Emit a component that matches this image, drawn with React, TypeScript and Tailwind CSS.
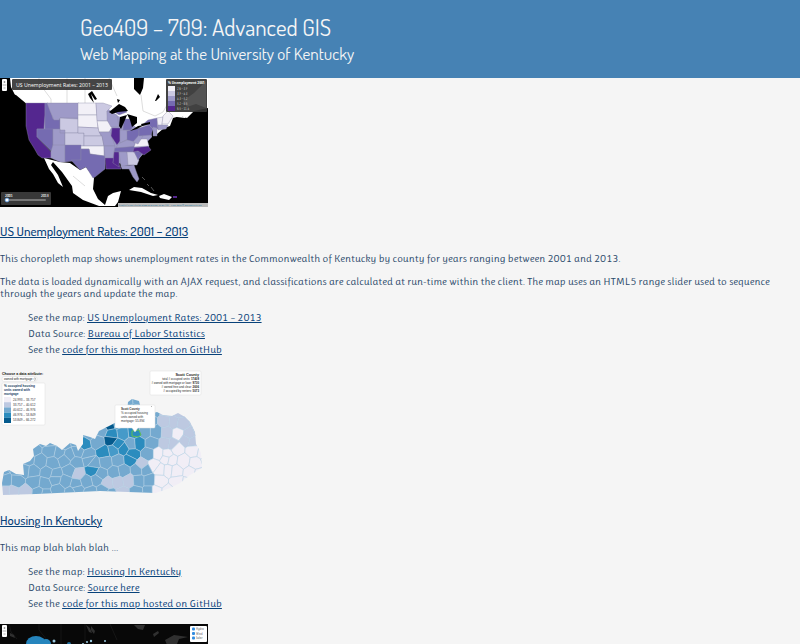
import type { ReactNode } from "react";

type Shape = [string, string];

const states: Shape[] = [
  ["26,25 45,25 45,37 44,49 44,51 37,51 37,59 51,74 51,80 42,80 38,77 34,70 29,62 26,48 26,36", "#54278f"],
  ["45,25 48,25 51,34 53,41 60,41 60,52 45,52", "#756bb1"],
  ["47,25 79,25 79,40 60,40 59,42 54,42 50,33", "#9e9ac8"],
  ["60,40 78,41 78,55 65,55 65,52 60,52", "#cbc9e2"],
  ["37,51 53,51 53,70 51,73 37,59", "#756bb1"],
  ["53,51 60,51 60,55 65,55 65,68 53,68", "#9e9ac8"],
  ["65,55 84,55 84,68 65,68", "#cbc9e2"],
  ["53,67 65,67 65,84 60,84 51,80 51,73", "#9e9ac8"],
  ["65,67 81,67 81,82 65,84", "#756bb1"],
  ["78,25 96,25 97,37 78,37", "#f2f0f7"],
  ["78,37 97,37 98,50 78,49", "#f2f0f7"],
  ["78,49 98,50 101,58 84,58 84,55 78,55", "#cbc9e2"],
  ["84,58 102,58 104,68 84,68", "#cbc9e2"],
  ["81,68 104,68 104,78 90,76 89,71 81,71", "#f2f0f7"],
  ["81,71 89,71 90,76 105,78 105,91 95,99 93,100 86,89 80,92 71,82 81,82", "#756bb1"],
  ["96,25 103,25 112,28 107,33 108,43 97,43", "#cbc9e2"],
  ["97,43 109,43 112,49 109,54 99,54", "#f2f0f7"],
  ["99,54 110,54 115,68 104,68 102,58", "#9e9ac8"],
  ["104,68 115,68 113,80 105,80", "#9e9ac8"],
  ["105,80 114,80 113,85 119,86 121,91 106,91", "#54278f"],
  ["107,33 117,37 119,49 111,49 107,42", "#9e9ac8"],
  ["112,50 120,50 120,63 117,67 111,58", "#54278f"],
  ["120,52 127,52 128,61 120,65", "#9e9ac8"],
  ["113,33 122,29 127,34 119,37", "#756bb1"],
  ["124,41 131,41 133,48 131,52 123,52", "#756bb1"],
  ["127,53 139,50 139,59 133,64 127,62", "#756bb1"],
  ["118,66 127,62 136,64 133,69 116,70", "#9e9ac8"],
  ["115,70 139,68 134,74 114,74", "#756bb1"],
  ["114,74 119,74 119,89 113,85", "#54278f"],
  ["119,74 127,74 129,87 121,89", "#9e9ac8"],
  ["127,74 134,74 139,82 137,87 128,87", "#cbc9e2"],
  ["134,73 143,74 138,82", "#756bb1"],
  ["134,70 148,68 151,72 144,77 138,73 133,74", "#54278f"],
  ["136,63 140,61 147,61 149,68 134,69", "#f2f0f7"],
  ["133,64 139,57 143,58 138,66", "#9e9ac8"],
  ["139,50 149,47 153,51 151,57 139,58", "#756bb1"],
  ["141,48 148,42 157,40 158,51 152,50 149,47", "#756bb1"],
  ["153,49 157,50 157,58 153,58", "#9e9ac8"],
  ["157,40 163,39 162,47 158,48", "#f2f0f7"],
  ["158,47 168,47 166,51 158,52", "#9e9ac8"],
  ["163,38 168,33 173,38 168,46 162,46", "#f2f0f7"],
  ["121,88 134,87 136,93 139,101 137,104 133,99 129,91 122,91", "#9e9ac8"],
];

const lakes = [
  "109,34 114,30 119,26 125,29 128,33 118,34 112,36",
  "120,39 127,37 125,42 121,51 119,48",
  "127,36 137,39 137,45 132,49 130,42",
  "130,53 138,48 144,47 137,51",
  "141,46 150,44 150,46 142,48",
];

function ZoomControl() {
  return (
    <g>
      <rect x="2" y="1" width="5" height="12" rx="1" fill="#fff" />
      <path d="M2.5 7h4M3.5 4h2M4.5 3v2M3.5 10h2" stroke="#777" strokeWidth=".6" />
    </g>
  );
}

function UnemploymentMap() {
  const classes: Shape[] = [
    ["#f2f0f7", "2.6 – 3.7"],
    ["#cbc9e2", "3.7 – 4.3"],
    ["#9e9ac8", "4.3 – 5.2"],
    ["#756bb1", "5.2 – 6.5"],
    ["#54278f", "6.5 – 11.4"],
  ];
  return (
    <svg viewBox="0 0 208 129" className="block w-52" role="img" aria-label="Map of US unemployment rates">
      <rect width="208" height="129" fill="#000" />
      <path d="M10 0H208V30L194 33 187 40 180 38 173 40 170 48 164 50 157 56 153 52 139 56 128 62 118 58 108 52 26 27 16 19 11 9Z" fill="#fff" />
      <path d="M44 80L60 84 70 85 80 92 86 89 94 100 93 111 98 121 105 127 108 118 113 115 121 113 118 124 115 128H99L83 122 73 115 72 108 62 94 53 84 51 87 58 97 63 109 58 105 53 96 49 91Z" fill="#fff" />
      <path d="M134 0H144L143 10 140 17 134 11ZM155 23l3-7 2 3-4 4ZM88 16l4-3 5 8-2 1-4-6 3 9-4-5ZM117 21l3 1-2 3ZM12 16l4 1 12 10-2 1-10-8Z" fill="#000" />
      <path d="M39 0V5L51 21V25M67 0V25M85 0V25M109 0L117 18M141 17L143 33 155 38 163 34 167 27M73 98L85 108" fill="none" stroke="#bbb" strokeWidth=".5" />
      <path d="M45 27H103L118 38 128 42 139 52 150 49 152 59 147 64 149 69 138 82 128 87 112 84 90 76 55 72 40 55Z" fill="#9e9ac8" />
      <g stroke="#8c89a6" strokeWidth=".4">
        {states.map(([points, fill]) => (
          <polygon key={points} points={points} fill={fill} />
        ))}
      </g>
      {lakes.map((points) => (
        <polygon key={points} points={points} fill="#000" />
      ))}
      <path d="M129 112l5-3 8 1 9 5 7 2-5 1-12-4ZM159 118l5-2 8 3-3 3-9-2Z" fill="#fff" />
      <path d="M142 99l3 3M147 106l2 2M151 109l3 4" stroke="#777" strokeWidth=".7" />
      <path d="M173 119h4" stroke="#54278f" strokeWidth="2" />
      <path d="M175 39l4-4 4 4 5-3-3 4-8-1Z" fill="#fff" />
      <ZoomControl />
      <rect x="12" y="1" width="100" height="11" rx="1" fill="#292929" fillOpacity=".87" />
      <text x="16" y="8.5" fill="#fff" fontSize="5.2" className="font-['Open_Sans']">US Unemployment Rates: 2001 – 2013</text>
      <rect x="166" y="1" width="41" height="33" rx="1" fill="#333" fillOpacity=".93" />
      <path d="M183 23l11-8 12-12v27l-10-4-9 3Z" fill="#666" fillOpacity=".5" />
      <text x="168" y="6" fill="#fff" fontSize="3.2" fontWeight="700" className="font-['Open_Sans']">% Unemployment 2001</text>
      {classes.map(([fill, label], i) => (
        <g key={label}>
          <rect x="168" y={8 + i * 5} width="7" height="5" fill={fill} />
          <text x="177" y={12 + i * 5} fill="#ddd" fontSize="3">{label}</text>
        </g>
      ))}
      <rect x="1" y="114" width="50" height="13" rx="1" fill="#383838" />
      <text x="5" y="119" fill="#fff" fontSize="3.5" fontWeight="700">2001</text>
      <text x="41" y="119" fill="#fff" fontSize="3.5" fontWeight="700">2013</text>
      <rect x="5" y="121" width="41" height="2" rx="1" fill="#777" />
      <circle cx="7" cy="122" r="2" fill="#fff" stroke="#3d8bdf" strokeWidth=".7" />
      <rect x="118" y="125" width="90" height="4" fill="#bbb" />
      <text x="119" y="127.8" fill="#0878a8" fontSize="2.6">Leaflet | Map tiles by Stamen Design, CC BY 3.0 — Map data © OpenStreetMap</text>
    </svg>
  );
}

const kentucky =
  "M3 125L2 113 4 102 9 100 16 104 24 105 23 94 30 91 34 86 33 79 40 74 46 76 50 73 57 76 62 80 70 73 76 75 78 81 83 74 83 65 90 67 95 69 99 61 107 57 115 53 119 44 127 42 128 32 132 29 139 31 142 43 150 44 157 42 163 45 172 46 178 43 185 47 190 52 195 62 196 74 201 83 202 98 190 105 180 113 170 118 156 123 100 121 36 124Z";

type Point = [number, number];

const seats: Point[] = [];
for (let row = 0; row < 10; row++) {
  for (let col = 0; col < 20; col++) {
    const jx = ((col * 37 + row * 23 + col * row * 5) % 13) - 6;
    const jy = ((col * 19 + row * 41 + col * col * 7) % 13) - 6;
    seats.push([col * 11 + (row % 2) * 5 + jx * 0.55 - 2, row * 10 + 32 + jy * 0.5]);
  }
}

// Cuts the square around one county seat down to the points nearer to it than to any other seat.
function countyShape([sx, sy]: Point): Point[] {
  let cell: Point[] = [[sx - 15, sy - 15], [sx + 15, sy - 15], [sx + 15, sy + 15], [sx - 15, sy + 15]];
  for (const [ox, oy] of seats) {
    const dx = ox - sx;
    const dy = oy - sy;
    if ((dx === 0 && dy === 0) || Math.hypot(dx, dy) > 42) continue;
    const side = ([x, y]: Point) => (x - (sx + ox) / 2) * dx + (y - (sy + oy) / 2) * dy;
    const next: Point[] = [];
    cell.forEach((a, i) => {
      const b = cell[(i + 1) % cell.length];
      const sa = side(a);
      const sb = side(b);
      if (sa <= 0) next.push(a);
      if (sa < 0 !== sb < 0) {
        const t = sa / (sa - sb);
        next.push([a[0] + (b[0] - a[0]) * t, a[1] + (b[1] - a[1]) * t]);
      }
    });
    cell = next;
  }
  return cell;
}

const darkCounties: Point[] = [[73, 78], [88, 72], [103, 76], [88, 101], [112, 67], [125, 73], [108, 83], [121, 79], [136, 68], [137, 84], [134, 35], [114, 74], [126, 85]];
const navyCounties: Point[] = [[115, 70], [111, 56]];
const lilacCounties: Point[] = [[9, 121], [30, 121], [52, 115], [77, 101], [102, 114], [115, 115], [130, 109], [137, 94], [148, 92], [121, 118]];

function countyFill([x, y]: Point) {
  const near = (list: Point[], reach: number) => list.some(([a, b]) => Math.hypot(x - a, y - b) < reach);
  if (near(navyCounties, 5)) return "#045a8d";
  if (near(darkCounties, 6)) return "#2b8cbe";
  if (y > 77 && x > 154) return "#f1eef6";
  if (Math.hypot(x - 180, y - 66) < 6) return "#f1eef6";
  if (near(lilacCounties, 6) || (x > 162 && y < 77)) return "#bdc9e1";
  if (x > 102 && x < 128 && y > 50 && y < 87) return "#469ac9";
  return "#74a9cf";
}

const counties = seats.map((seat) => ({
  points: countyShape(seat).map(([x, y]) => `${x.toFixed(1)},${y.toFixed(1)}`).join(" "),
  fill: countyFill(seat),
}));

function HousingMap() {
  const classes: Shape[] = [
    ["#f1eef6", "24.993 – 33.757"],
    ["#bdc9e1", "33.757 – 40.612"],
    ["#74a9cf", "40.612 – 46.976"],
    ["#2b8cbe", "46.976 – 53.849"],
    ["#045a8d", "53.849 – 66.272"],
  ];
  return (
    <svg viewBox="0 0 208 126" className="block w-52 font-['Liberation_Sans',sans-serif]" role="img" aria-label="Map of housing in Kentucky">
      <defs>
        <clipPath id="kentucky"><path d={kentucky} /></clipPath>
      </defs>
      <g clipPath="url(#kentucky)" stroke="#b4d0e5" strokeWidth=".5">
        {counties.map(({ points, fill }, i) => <polygon key={i} points={points} fill={fill} />)}
      </g>
      <path d="M132 61l7-1 2 5-3 2-6-1Z" fill="#2b8cbe" stroke="#61bd55" strokeWidth="1" />
      <text x="2" y="5" fill="#111" fontSize="3.6" fontWeight="700">Choose a data attribute:</text>
      <rect x="2" y="6.5" width="35" height="5" rx="2" fill="#fff" stroke="#ddd" strokeWidth=".5" />
      <text x="4" y="10" fill="#222" fontSize="3">owned with mortgage</text>
      <path d="M34 8.6l.8-.8.8.8M34 9.5l.8.8.8-.8" fill="none" stroke="#222" strokeWidth=".5" />
      <g stroke="#ddd" strokeWidth=".5" fill="#fff">
        <rect x="2" y="13" width="43" height="42" rx="1" />
        <rect x="150" y="1" width="51" height="24" rx="1" />
        <path d="M116 35h38q1 0 1 1v21q0 1-1 1h-16l-3 4-3-4h-16q-1 0-1-1V36q0-1 1-1Z" />
      </g>
      <g fill="#173e60" fontSize="3.2" fontWeight="700">
        <text x="4" y="17">% occupied housing</text>
        <text x="4" y="21">units owned with</text>
        <text x="4" y="25">mortgage</text>
      </g>
      {classes.map(([fill, label], i) => (
        <g key={label}>
          <rect x="4" y={27 + i * 5.2} width="7" height="5.2" fill={fill} />
          <text x="13" y={30.6 + i * 5.2} fill="#333" fontSize="3.1">{label}</text>
        </g>
      ))}
      <g fill="#222" fontSize="2.9" textAnchor="end">
        <text x="199" y="6" fontSize="3.8" fontWeight="700">Scott County</text>
        <text x="199" y="10">total # occupied units: <tspan fontWeight="700">17409</tspan></text>
        <text x="199" y="14"># owned with mortgage or loan: <tspan fontWeight="700">9730</tspan></text>
        <text x="199" y="18"># owned free and clear: <tspan fontWeight="700">2606</tspan></text>
        <text x="199" y="22"># occupied by renters: <tspan fontWeight="700">5073</tspan></text>
      </g>
      <g fill="#333" fontSize="3">
        <text x="121" y="40" fontWeight="700">Scott County</text>
        <text x="121" y="44">% occupied housing</text>
        <text x="121" y="48">units owned with</text>
        <text x="121" y="52">mortgage: 55.894</text>
      </g>
      <path d="M151 36l1 1m0-1l-1 1" stroke="#888" strokeWidth=".4" />
    </svg>
  );
}

function EnergyMap() {
  return (
    <svg viewBox="0 0 208 129" className="block w-52" role="img" aria-label="Map of renewable energy">
      <rect width="208" height="129" fill="#080808" />
      <path d="M9 0l2 8 6 7M39 0V6L51 21H85M61 0v21M85 0v21M110 0l7 16" fill="none" stroke="#202020" strokeWidth=".6" />
      <path d="M86 1l4 3 2 5-3-1ZM91 2l4 5-1 3-3-4ZM134 1h11l-2 5-5-1ZM153 10l5-3 1 2-5 4ZM10 9l4 2 1 3-5-2ZM165 16l9-5 14 2-9 2-2 5-10 1Z" fill="#303030" />
      <ellipse cx="36" cy="20" rx="10" ry="8" fill="#2685bd" />
      <circle cx="46" cy="20" r="5" fill="#2685bd" />
      <circle cx="69" cy="20" r="2" fill="#216e9e" />
      <g fill="#9ac8df">
        <circle cx="54" cy="17" r="1.5" /><circle cx="83" cy="20" r="1" />
        <circle cx="87" cy="18" r="1" /><circle cx="91" cy="17" r="1.2" />
        <circle cx="105" cy="17" r="1" />
      </g>
      <ZoomControl />
      <rect x="190" y="2" width="17" height="16" rx="1" fill="#fff" />
      {["Hydro", "Wind", "Solar"].map((name, i) => (
        <g key={name}>
          <rect x="192" y={3.5 + i * 4.5} width="3" height="3" rx="1" fill="#318be0" />
          <text x="196" y={6 + i * 4.5} fill="#444" fontSize="3">{name}</text>
        </g>
      ))}
    </svg>
  );
}

const linkStyle = "text-[#08427a] underline decoration-1 underline-offset-1";

type ProjectProps = {
  map: ReactNode;
  title: string;
  paragraphs: string[];
  source: string;
};

function Project({ map, title, paragraphs, source }: ProjectProps) {
  return (
    <article className="mb-3">
      {map}
      <h2 className="mt-3.5 mb-3 font-[Dosis,Lato,sans-serif] text-[13px] leading-5 font-medium">
        <a href="#map" className={linkStyle}>{title}</a>
      </h2>
      <div className="flex flex-col gap-[11px]">
        {paragraphs.map((text) => <p key={text}>{text}</p>)}
      </div>
      <ul className="mt-2.5 pl-7 leading-4">
        <li>See the map: <a href="#map" className={linkStyle}>{title}</a></li>
        <li>Data Source: <a href="#source" className={linkStyle}>{source}</a></li>
        <li>See the <a href="#code" className={linkStyle}>code for this map hosted on GitHub</a></li>
      </ul>
    </article>
  );
}

export default function App() {
  return (
    <div className="h-screen overflow-hidden bg-[#f5f5f5] font-[Ruluko,Lato,sans-serif] text-[11px] leading-3 text-[#2b4a6b]">
      <header className="bg-[#4682b4] px-20 pt-3 pb-3 font-[Dosis,Lato,sans-serif] text-[#f5f5f5]">
        <h1 className="text-[23px] leading-[30px]">Geo409 – 709: Advanced GIS</h1>
        <p className="text-[17px] leading-6">Web Mapping at the University of Kentucky</p>
      </header>
      <main>
        <Project
          map={<UnemploymentMap />}
          title="US Unemployment Rates: 2001 – 2013"
          paragraphs={[
            "This choropleth map shows unemployment rates in the Commonwealth of Kentucky by county for years ranging between 2001 and 2013.",
            "The data is loaded dynamically with an AJAX request, and classifications are calculated at run-time within the client. The map uses an HTML5 range slider used to sequence through the years and update the map.",
          ]}
          source="Bureau of Labor Statistics"
        />
        <Project
          map={<HousingMap />}
          title="Housing In Kentucky"
          paragraphs={["This map blah blah blah ..."]}
          source="Source here"
        />
        <EnergyMap />
      </main>
    </div>
  );
}
